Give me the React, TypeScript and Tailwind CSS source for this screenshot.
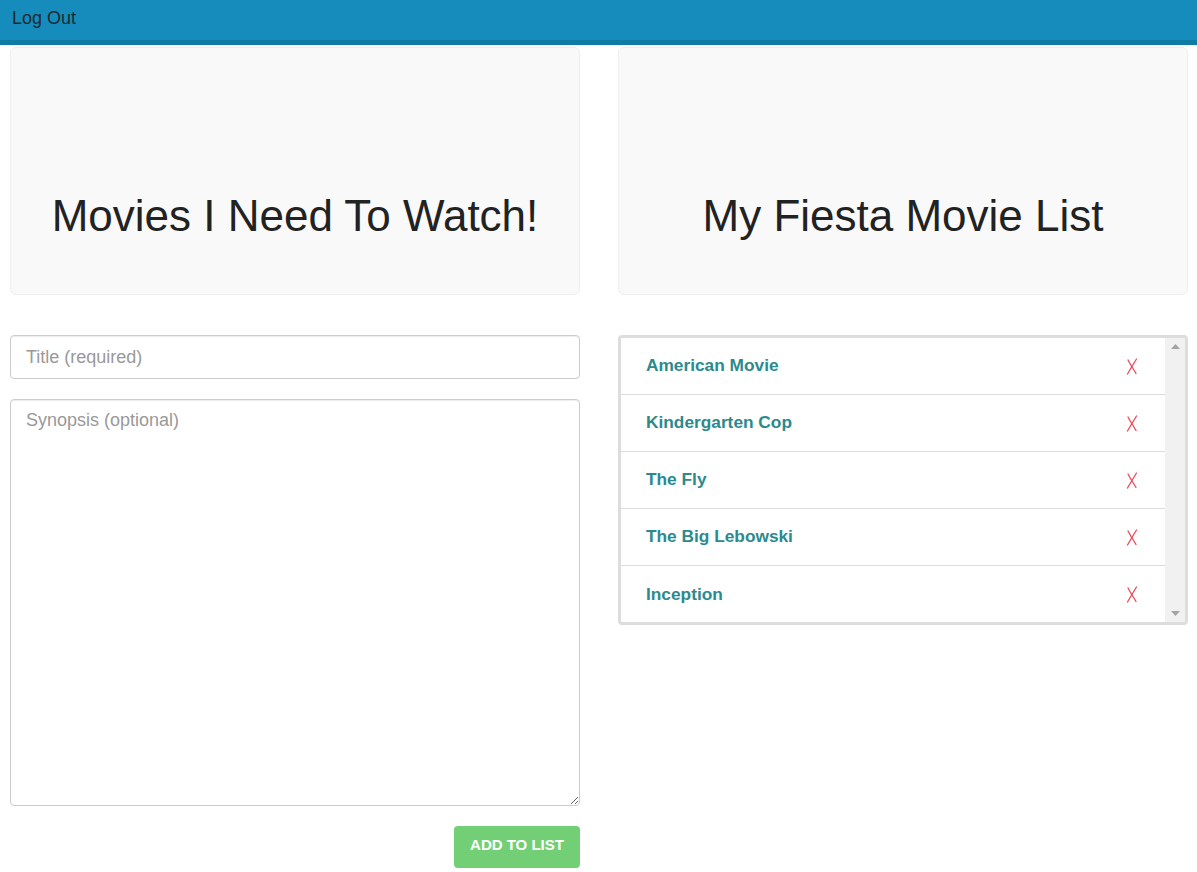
import { useState } from "react";

const font = "font-['Liberation_Sans',Arial,sans-serif]";

const movies = ["American Movie", "Kindergarten Cop", "The Fly", "The Big Lebowski", "Inception"];

function RemoveMark() {
  return (
    <svg width="12" height="17" viewBox="0 0 12 17" fill="none" stroke="#ec4a55" strokeWidth="1.3" strokeLinecap="round">
      <path d="M10.5 1 C8 5, 5 10, 1.5 16" />
      <path d="M2 2 C4.5 7, 7.5 11, 10 15.5" />
    </svg>
  );
}

function Jumbo({ title }: { title: string }) {
  return (
    <div className="flex h-[248px] justify-center rounded-md border border-[#eeeeee] bg-[#f9f9f9] pt-[146px]">
      <h1 className="text-[44px] leading-none text-[#222222]">{title}</h1>
    </div>
  );
}

export default function App() {
  const [title, setTitle] = useState("");
  const [synopsis, setSynopsis] = useState("");

  return (
    <div className={`${font} min-h-[872px] bg-white`}>
      <div className="flex h-[45px] items-start border-b-[5px] border-b-[#0f7aa3] bg-[#158cbc] px-3 pt-[5px]">
        <span className="text-[18px] text-[#1f2a30]">Log Out</span>
      </div>

      <div className="grid grid-cols-[570px_570px] gap-[38px] pl-[10px] pt-[2px]">
        <div className="flex flex-col">
          <Jumbo title="Movies I Need To Watch!" />
          <input
            className="mt-[40px] h-[44px] rounded border border-[#cccccc] px-[15px] text-[18px] text-[#555555] shadow-[inset_0_1px_1px_rgba(0,0,0,0.075)] outline-none placeholder:text-[#999999]"
            placeholder="Title (required)"
            value={title}
            onChange={(e) => setTitle(e.target.value)}
          />
          <textarea
            className="mt-[20px] h-[407px] rounded border border-[#cccccc] px-[15px] py-[7px] text-[18px] text-[#555555] shadow-[inset_0_1px_1px_rgba(0,0,0,0.075)] outline-none placeholder:text-[#999999]"
            placeholder="Synopsis (optional)"
            value={synopsis}
            onChange={(e) => setSynopsis(e.target.value)}
          />
          <div className="mt-[20px] flex justify-end">
            <button className="h-[42px] w-[126px] rounded bg-[#73cf76] pb-[3px] text-[15px] font-bold text-white">
              ADD TO LIST
            </button>
          </div>
        </div>

        <div className="flex flex-col">
          <Jumbo title="My Fiesta Movie List" />
          <div className="mt-[40px] flex h-[290px] rounded border-[3px] border-[#dddddd] bg-white">
            <ul className="flex-1">
              {movies.map((m, i) => (
                <li
                  key={m}
                  className={`flex h-[57px] items-center justify-between pl-[25px] pr-[27px] ${
                    i < movies.length - 1 ? "border-b border-[#dddddd]" : ""
                  }`}
                >
                  <span className="text-[17.3px] font-bold text-[#2a8a8e]">{m}</span>
                  <RemoveMark />
                </li>
              ))}
            </ul>
            <div className="flex w-[20px] flex-col items-center justify-between bg-[#f1f1f1] py-[6px]">
              <svg width="9" height="5" viewBox="0 0 9 5"><path d="M4.5 0 L9 5 L0 5 Z" fill="#a3a3a3" /></svg>
              <svg width="9" height="5" viewBox="0 0 9 5"><path d="M0 0 L9 0 L4.5 5 Z" fill="#a3a3a3" /></svg>
            </div>
          </div>
        </div>
      </div>
    </div>
  );
}
